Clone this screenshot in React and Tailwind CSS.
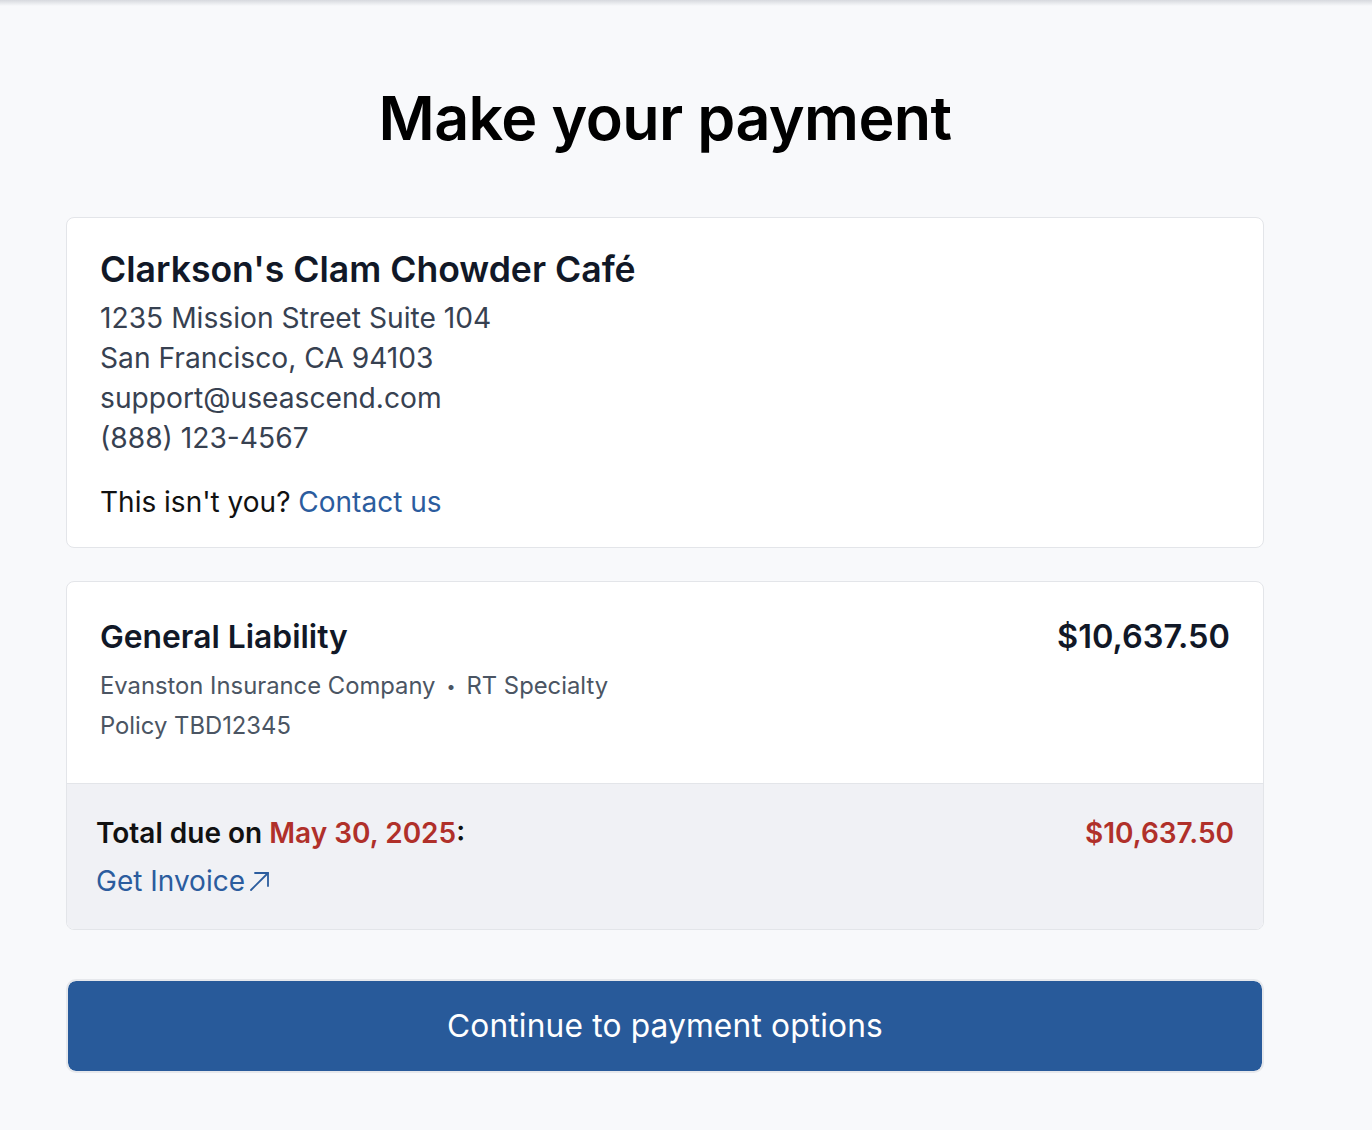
import React from 'react';

const OutArrow = () => (
  <svg width="22" height="22" viewBox="0 0 22 22" fill="none" stroke="currentColor" strokeWidth="1.8" strokeLinecap="round" strokeLinejoin="round" className="ml-[4px]">
    <path d="M2 20 L19 3" />
    <path d="M6 3 H19 V16" />
  </svg>
);

const App = () => {
  const contact = [
    '1235 Mission Street Suite 104',
    'San Francisco, CA 94103',
    'support@useascend.com',
    '(888) 123-4567',
  ];

  return (
    <div className="min-h-screen bg-[#f8f9fb] font-['Inter',sans-serif] antialiased">
      {/* header shadow bleeding in from above */}
      <div className="h-[6px] bg-gradient-to-b from-[#d7d9de] to-transparent"></div>

      <div className="w-[1198px] ml-[66px] pt-[82px] pb-[58px]">
        <h1 className="text-[61px] leading-[60px] font-semibold text-black text-center tracking-[-0.01em]">
          Make your payment
        </h1>

        {/* Insured card */}
        <div className="mt-[69px] bg-white border border-[#e3e5e9] rounded-[8px] pl-[33px] pr-[33px] pt-[32px] pb-[25px]">
          <h2 className="text-[35.6px] leading-[40px] font-semibold text-[#111827]">Clarkson's Clam Chowder Café</h2>
          <div className="mt-[8px] text-[28.2px] leading-[40px] text-[#374151]">
            {contact.map((line, i) => (
              <div key={i}>{line}</div>
            ))}
          </div>
          <p className="mt-[24px] text-[28px] leading-[40px] text-[#111111]">
            This isn't you? <a className="text-[#2b5c9e]">Contact us</a>
          </p>
        </div>

        {/* Policy card */}
        <div className="mt-[33px] bg-white border border-[#e3e5e9] rounded-[8px] overflow-hidden">
          <div className="px-[33px] pt-[35px] pb-[37px] flex justify-between items-start">
            <div>
              <h3 className="text-[31.8px] leading-[40px] font-semibold text-[#111827]">General Liability</h3>
              <div className="mt-[9px] text-[23.8px] leading-[40px] text-[#4b5563]">
                <div className="flex items-center">
                  <span>Evanston Insurance Company</span>
                  <span className="mx-[11px] text-[16px]">•</span>
                  <span>RT Specialty</span>
                </div>
                <div>Policy TBD12345</div>
              </div>
            </div>
            <div className="text-[32.5px] leading-[40px] font-semibold text-[#111827]">$10,637.50</div>
          </div>
          <div className="bg-[#f0f1f5] border-t border-[#e3e5e9] px-[29px] pt-[29px] pb-[28px]">
            <div className="flex justify-between items-center">
              <div className="text-[28px] leading-[40px] font-semibold text-[#111111]">
                Total due on <span className="text-[#b0302a]">May 30, 2025</span>:
              </div>
              <div className="text-[28px] leading-[40px] font-semibold text-[#b0302a]">$10,637.50</div>
            </div>
            <a className="mt-[8px] flex items-center text-[28px] leading-[40px] text-[#2b5c9e]">
              Get Invoice
              <OutArrow />
            </a>
          </div>
        </div>

        <button className="mt-[49px] w-full h-[94px] rounded-[10px] border-2 border-[#e6e8ec] bg-[#285a9a] bg-clip-padding text-white text-[31.7px] tracking-[0.005em]">
          Continue to payment options
        </button>
      </div>
    </div>
  );
};

export default App;
